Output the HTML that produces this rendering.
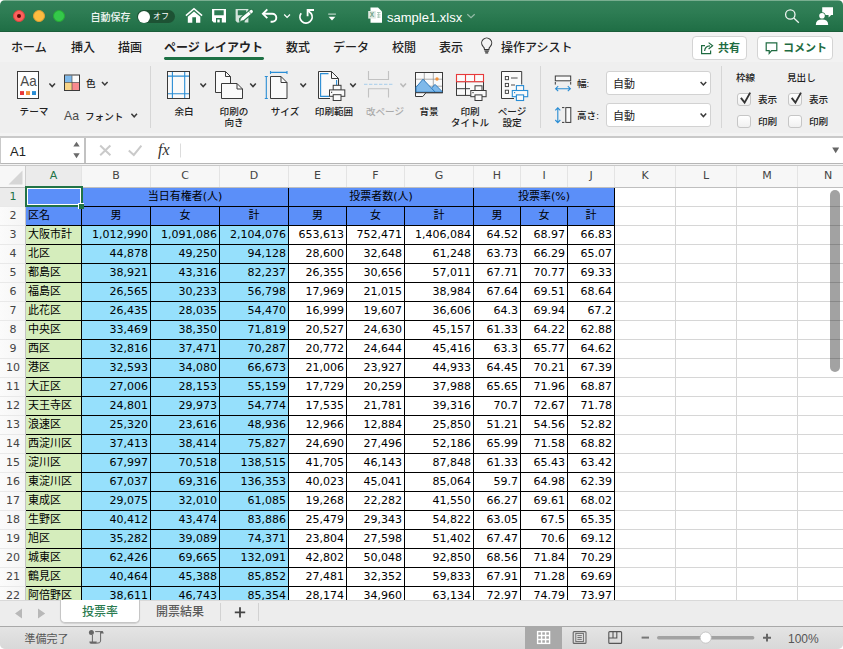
<!DOCTYPE html>
<html lang="ja">
<head>
<meta charset="utf-8">
<title>sample1.xlsx</title>
<style>
*{box-sizing:border-box;margin:0;padding:0}
html,body{width:843px;height:649px;overflow:hidden;background:#fff}
body{font-family:"Liberation Sans","Noto Sans CJK JP",sans-serif;color:#222;position:relative}
.abs{position:absolute}
#win{position:absolute;left:0;top:0;width:843px;height:649px;overflow:hidden;border-radius:5px 5px 5px 5px;background:#f1f1f1}
/* title bar */
#title{position:absolute;left:0;top:0;width:843px;height:32px;background:linear-gradient(#33815a 0,#2d7c53 40%,#1f6e45 100%);border-top:1px solid #79ae90;border-bottom:1px solid #1b5e3a}
.tl{position:absolute;top:8.6px;width:12.4px;height:12.4px;border-radius:50%}
#title .t{position:absolute;color:#fff;white-space:nowrap}
/* tabs */
#tabs{position:absolute;left:0;top:32px;width:843px;height:30px;background:#f2f2f2}
#tabs .tb{position:absolute;top:8px;font-size:12px;font-weight:500;line-height:16px;color:#222;white-space:nowrap}
.btn{position:absolute;top:4px;height:24px;border:1px solid #d4d4d4;border-radius:4px;background:#fff;font-size:11px;font-weight:bold;line-height:23px;color:#1e6b41;white-space:nowrap}
/* ribbon */
#ribbon{position:absolute;left:0;top:62px;width:843px;height:71px;background:#efefef}
#ribbon .lb{position:absolute;font-weight:500;font-size:9.6px;line-height:12px;color:#222;text-align:center;white-space:nowrap}
.dd{position:absolute;left:606px;width:105px;height:24px;border:1px solid #d2d2d2;border-radius:3px;background:#fff;font-size:11px;line-height:22px;padding-left:6px;padding-top:1px;color:#222}
.cb{position:absolute;width:14px;height:13px;border:1px solid #c6c6c6;border-radius:3px;background:linear-gradient(#fff,#f0f0f0)}
#ribbon .sep{position:absolute;top:4px;width:1px;height:62px;background:#d6d6d6}
/* formula bar */
#fgap{position:absolute;left:0;top:133px;width:843px;height:33px;background:#f3f3f3;border-bottom:1px solid #c8c8c8}
#fbar{position:absolute;left:0;top:136px;width:843px;height:28px;background:#fff;border-top:2px solid #c9c9c9;border-bottom:1px solid #b6b6b6;border-left:1px solid #c9c9c9}
/* grid */
#grid{position:absolute;left:0;top:166px;width:843px;height:434px;overflow:hidden;background:#fff;
 font-family:"DejaVu Sans","Liberation Sans","Noto Sans CJK JP",sans-serif;font-size:11px}
#gl{position:absolute;left:26px;top:22px;width:817px;height:413px;
 background-image:linear-gradient(to bottom,transparent 18px,#d6d6d6 18px);background-size:100% 19px;background-position:0 0}
.vl{position:absolute;top:21px;width:1px;height:413px;background:#d6d6d6}
.ch{position:absolute;top:0;height:22px;line-height:20px;text-align:center;color:#444;background:#f7f7f7;font-size:11px;border-bottom:1px solid #bfbfbf;z-index:3}
.ch.sel{color:#217346;background:#ebebeb}
.rh{position:absolute;left:0;padding-left:1px;width:26px;height:19px;line-height:18px;text-align:center;color:#444;background:linear-gradient(90deg,#fbfbfb,#f5f5f5);border-bottom:1px solid #e9e9e9;border-right:1px solid #c4c4c4;font-size:11px}
.rh.sel{color:#217346;background:#ebebeb}
#corner{position:absolute;left:0;top:0;width:26px;height:22px;background:#f7f7f7;border-bottom:1px solid #bfbfbf;z-index:3}
.c{position:absolute;height:20px;border:1px solid #000;line-height:18px;white-space:nowrap;overflow:hidden;color:#000}
.c.hd{background:#5b8ff9}
.c.gr{background:#d5edbc}
.c.bl{background:#96e0fc}
.c.wh{background:#fff}
.c.l{text-align:left;padding-left:2px;border-left:none}
.c.m{text-align:center}
.c.r{text-align:right;padding-right:2px}
/* sheet tabs */
#sheets{position:absolute;left:0;top:600px;width:843px;height:26px;background:#ededed;border-top:1px solid #d9d9d9}
#status{position:absolute;left:0;top:626px;width:843px;height:23px;background:linear-gradient(#e4e4e4,#d8d8d8);border-top:1px solid #a9a9a9}
</style>
</head>
<body>
<div id="win">

<div id="title">
  <div class="tl" style="left:12.8px;background:#fc615d;border:0.5px solid #e0443e"></div>
  <div class="tl" style="left:32.8px;background:#fdbc40;border:0.5px solid #de9f34"></div>
  <div class="tl" style="left:52.8px;background:#34c84a;border:0.5px solid #27aa35"></div>
  <div class="abs" style="left:17px;top:12.8px;width:4px;height:4px;border-radius:50%;background:#5c0805"></div>
  <div class="t" style="left:90.5px;top:9px;font-size:10px;font-weight:500;line-height:15px;color:#f1f6f3">自動保存</div>
  <div class="abs" style="left:137px;top:9px;width:38px;height:13px;border-radius:7px;background:#1d5234"></div>
  <div class="abs" style="left:138px;top:9.5px;width:12px;height:12px;border-radius:50%;background:#fff"></div>
  <div class="t" style="left:153px;top:10px;font-size:8px;line-height:11px">オフ</div>
  <svg class="abs" style="left:0;top:-1px" width="843" height="32" viewBox="0 0 843 32">
    <!-- home -->
    <path d="M185.9 15.6 L194 8.7 L202.1 15.6" fill="none" stroke="#fff" stroke-width="1.6"/>
    <path d="M187.8 16.8 L194 11.5 L200.3 16.8 V22.7 H196 V17.3 H192.3 V22.7 H187.8Z" fill="#fff"/>
    <!-- save -->
    <path d="M212 9 H226 V22.4 H213.6 L212 20.8Z M214.3 10.2 V15.3 H223.7 V10.2Z M216 18.1 V22.4 H221.8 V18.1Z" fill="#fff" fill-rule="evenodd"/>
    <rect x="217.3" y="19.5" width="2.4" height="2.9" fill="#fff"/>
    <!-- save as -->
    <path d="M235.6 9 H248.4 V22.4 H237.2 L235.6 20.8Z M237.8 10.2 V15.2 H246.2 V10.2Z M239.4 18.1 V22.4 H244.6 V18.1Z" fill="#fff" fill-opacity=".8" fill-rule="evenodd"/>
    <path d="M242 19.4 L251.3 11.6" stroke="#2a784e" stroke-width="5.6" stroke-linecap="round"/>
    <path d="M239.8 21.4 L240.9 17.6 L243.9 20.2Z" fill="#fff" stroke="#2a784e" stroke-width=".6"/>
    <path d="M243 18.4 L251.3 11.5" stroke="#fff" stroke-width="3.2" stroke-linecap="round"/>
    <path d="M248.2 10.6 L251.6 14.4" stroke="#2a784e" stroke-width=".7"/>
    <!-- undo -->
    <path d="M267.3 9.4 L262.9 13.8 L267.3 18.2" fill="none" stroke="#fff" stroke-width="1.9"/>
    <path d="M263.4 13.8 H272.3 A4 4 0 0 1 272.3 21.8 H270.6" fill="none" stroke="#fff" stroke-width="1.9"/>
    <path d="M284.2 14.5 L287.1 17.4 L290 14.5" fill="none" stroke="#fff" stroke-width="1.2"/>
    <!-- redo -->
    <path d="M301.2 13.2 A6.1 6.1 0 1 0 311.2 13.6 L307.6 10.2" fill="none" stroke="#fff" stroke-width="1.8"/>
    <path d="M307.6 16.2 V10 H314" fill="none" stroke="#fff" stroke-width="1.8"/>
    <!-- customize -->
    <rect x="328.2" y="13.4" width="7.7" height="1.5" fill="#fff" fill-opacity=".55"/>
    <path d="M328.6 16.8 H335.4 L332 20.6Z" fill="#fff"/>
    <!-- file icon -->
    <path d="M370.5 7.6 H378 L382 11.6 V22.8 H370.5Z" fill="#fff"/>
    <rect x="368.2" y="11" width="7.6" height="7.6" fill="#dfe9e3"/>
    <text x="372" y="17.3" font-size="6.5" font-weight="bold" fill="#6f9f84" text-anchor="middle" font-family="Liberation Sans, sans-serif">X</text>
    <path d="M377 12.5 H380.5 M377 14.8 H380.5 M377 17.1 H380.5 M378.7 12 V18" stroke="#9dbfab" stroke-width=".8"/>
    <!-- title chevron -->
    <path d="M467.3 14.2 L471 17.6 L474.7 14.2" fill="none" stroke="#fff" stroke-opacity=".5" stroke-width="1.2"/>
    <!-- search -->
    <circle cx="790.3" cy="14.5" r="4.7" fill="none" stroke="#fff" stroke-opacity=".92" stroke-width="1.3"/>
    <path d="M793.8 18 L798.8 22.7" stroke="#fff" stroke-opacity=".92" stroke-width="1.3"/>
    <!-- share person -->
    <path d="M822.2 7.2 H833 V15 H831.2 L828.6 17.6 V15 H822.2Z" fill="#fff"/>
    <circle cx="822" cy="15.8" r="3.6" fill="#2a774e"/>
    <circle cx="822" cy="15.8" r="2.8" fill="#fff"/>
    <path d="M815.8 25 Q815.8 19.6 822 19.6 Q828.2 19.6 828.2 25Z" fill="#fff"/>
  </svg>
  <div class="t" style="left:387px;top:8px;font-size:13px;line-height:17px">sample1.xlsx</div>
</div>

<div id="tabs">
  <div class="tb" style="left:11px">ホーム</div>
  <div class="tb" style="left:71px">挿入</div>
  <div class="tb" style="left:118px">描画</div>
  <div class="tb" style="left:164px;font-weight:bold">ページ レイアウト</div>
  <div class="abs" style="left:163.5px;top:25px;width:100.5px;height:2.8px;background:#1e7145;border-radius:1.4px"></div>
  <div class="tb" style="left:286px">数式</div>
  <div class="tb" style="left:333px">データ</div>
  <div class="tb" style="left:392px">校閲</div>
  <div class="tb" style="left:439px">表示</div>
  <div class="tb" style="left:501px">操作アシスト</div>
  <div class="btn" style="left:692px;width:55px;padding-left:25px">共有</div>
  <div class="btn" style="left:757px;width:76px;padding-left:25px">コメント</div>
  <svg class="abs" style="left:0;top:0" width="843" height="30" viewBox="0 32 843 30">
    <path d="M484.5 49.6 Q484.5 47.6 483 46.4 A5 5 0 1 1 490.4 46.4 Q488.9 47.6 488.9 49.6Z" fill="none" stroke="#333" stroke-width="1.1"/>
    <path d="M484.6 51.1 H488.8 M485.2 52.9 H488.2" stroke="#333" stroke-width="1.1"/>
    <g fill="none" stroke="#1e6b41" stroke-width="1.2">
      <path d="M705 45.6 H701.6 V53.6 H710.6 V50.6"/>
      <path d="M704.6 51 Q705 46 710 45.8 M708.6 42.6 L712.6 45.8 L708.6 49"/>
      <path d="M766.2 42.9 H776.8 V50.6 H771.6 L769.2 53.4 V50.6 H766.2Z"/>
    </g>
  </svg>
</div>

<div id="ribbon">
<svg class="abs" style="left:0;top:0;z-index:2" width="843" height="73" viewBox="0 62 843 73">
  <g fill="none" stroke="#3a3a3a" stroke-width="1.5">
    <!-- chevrons -->
    <path d="M49.4 83.6 L52.2 86.6 L55 83.6"/>
    <path d="M102 82 L104.8 85 L107.6 82"/>
    <path d="M131.4 113.8 L134.2 116.8 L137 113.8"/>
    <path d="M200.4 83.6 L203.2 86.6 L206 83.6"/>
    <path d="M250.2 83.6 L253 86.6 L255.8 83.6"/>
    <path d="M300.4 83.6 L303.2 86.6 L306 83.6"/>
    <path d="M350.2 83.6 L353 86.6 L355.8 83.6"/>
    <path d="M400.4 83.6 L403.2 86.6 L406 83.6" stroke="#b9b9b9"/>
    <path d="M700.6 82 L703.4 85 L706.2 82"/>
    <path d="M700.6 113.6 L703.4 116.6 L706.2 113.6"/>
  </g>
  <!-- theme -->
  <rect x="17.5" y="71.5" width="21" height="27" fill="#fff" stroke="#3a3a3a"/>
  <text x="20.2" y="85.9" font-size="14.8" fill="#4a4a4a" textLength="16.4" lengthAdjust="spacingAndGlyphs" font-family="Liberation Sans, sans-serif">Aa</text>
  <rect x="20" y="91.1" width="4" height="3.9" fill="#e8393a"/>
  <rect x="26" y="91.1" width="4" height="3.9" fill="#f4923a"/>
  <rect x="32" y="91.1" width="4" height="3.9" fill="#2a8dd4"/>
  <!-- colours -->
  <rect x="65" y="75.5" width="7" height="7" fill="#7fb9ea"/>
  <rect x="72" y="75.5" width="7" height="7" fill="#fbfbfb"/>
  <rect x="65" y="82.5" width="7" height="7.5" fill="#f8d488"/>
  <rect x="72" y="82.5" width="7" height="7.5" fill="#f98a8f"/>
  <rect x="64.5" y="75" width="15" height="15.5" fill="none" stroke="#3a3a3a"/>
  <path d="M72 75.5 V90 M65 82.5 H79" stroke="#3a3a3a" stroke-width=".6"/>
  <!-- fonts Aa -->
  <text x="64" y="119.8" font-size="13.2" fill="#4a4a4a" textLength="15" lengthAdjust="spacingAndGlyphs" font-family="Liberation Sans, sans-serif">Aa</text>
  <!-- margins -->
  <rect x="167.5" y="71.5" width="22" height="27" fill="#fafafa" stroke="#3a3a3a"/>
  <path d="M172.4 72 V98 M184.7 72 V98 M168 76.1 H189 M168 93.7 H189" stroke="#2a8dd4" stroke-width="1.1"/>
  <!-- orientation -->
  <path d="M221 92.5 H215.5 V71.5 H225.5 L230.5 76.5 V83" fill="#fafafa" stroke="#3a3a3a"/>
  <path d="M225.5 71.5 V76.5 H230.5" fill="none" stroke="#3a3a3a"/>
  <path d="M221.5 83.5 H237 L242.5 89 V98.5 H221.5Z" fill="#fafafa" stroke="#3a3a3a"/>
  <path d="M237 83.5 V89 H242.5" fill="none" stroke="#3a3a3a"/>
  <!-- size -->
  <path d="M270.5 76.5 H281 L287 82.5 V98.5 H270.5Z" fill="#fafafa" stroke="#3a3a3a"/>
  <path d="M281 76.5 V82.5 H287" fill="none" stroke="#3a3a3a"/>
  <path d="M270.5 72.4 H287 M270.5 70.9 V73.9 M287 70.9 V73.9 M266.3 76.5 V98.5 M264.8 76.5 H267.8 M264.8 98.5 H267.8" stroke="#2a8dd4" stroke-width="1.1" fill="none"/>
  <!-- print area -->
  <path d="M330 98.5 H318.5 V71.5 H331.5 L338.5 78.5 V86" fill="#fafafa" stroke="#3a3a3a"/>
  <path d="M331.5 71.5 V78.5 H338.5" fill="none" stroke="#3a3a3a"/>
  <path d="M328.5 73.6 H320.6 V96.4 H329 M336.6 80 V85.5" fill="none" stroke="#2a8dd4" stroke-width="1.1"/>
  <g fill="#fafafa" stroke="#3a3a3a">
    <rect x="333.2" y="85.3" width="7.8" height="5"/>
    <rect x="329.5" y="89.9" width="15.3" height="6.4"/>
    <rect x="333.2" y="94.7" width="7.8" height="5.8"/>
  </g>
  <rect x="331" y="91.7" width="1.2" height="1.2" fill="#3a3a3a"/>
  <!-- page break (disabled) -->
  <path d="M368.5 71 V79.5 H388.5 V71 M368.5 97.5 V88.7 H388.5 V97.5" fill="none" stroke="#c2c2c2" stroke-width="1.1"/>
  <path d="M364 84.4 H393" stroke="#b5d4ec" stroke-width="1.1" stroke-dasharray="3.4 1.6"/>
  <!-- background -->
  <rect x="415.5" y="72.5" width="27" height="20.2" fill="#fafafa" stroke="#3a3a3a"/>
  <path d="M424.3 73 V92 M433.3 73 V92 M416 79.2 H442 M416 86.2 H442" stroke="#8a8a8a" stroke-width=".7"/>
  <path d="M416 87.3 L423 79.2 L431.5 88.2 L435 84.4 L442 91.4 V92.2 H416Z" fill="#7fb9ea" stroke="#1f6fb5" stroke-width=".9"/>
  <path d="M431.5 88.2 L435.4 92.4" stroke="#1f6fb5" stroke-width=".9"/>
  <circle cx="437" cy="79" r="1.7" fill="#f4923a"/>
  <path d="M415.5 92.7 V96.5 H422.8 L426 92.7" fill="#fafafa" stroke="#3a3a3a"/>
  <path d="M415.5 92.7 H442.5" stroke="#3a3a3a"/>
  <!-- print titles -->
  <rect x="456.5" y="81.6" width="27" height="13.8" fill="#fafafa" stroke="#3a3a3a"/>
  <path d="M457 88.7 H470 M465.5 81.6 V95.4" stroke="#3a3a3a"/>
  <rect x="456.5" y="74.5" width="27" height="7.2" fill="#fafafa" stroke="#e8393a" stroke-width="1.1"/>
  <path d="M465.5 74.5 V81.6 M474.6 74.5 V81.6" stroke="#e8393a" stroke-width="1.1"/>
  <g fill="#fafafa" stroke="#3a3a3a">
    <rect x="475" y="85.8" width="7" height="5"/>
    <rect x="470.8" y="90.5" width="15.3" height="6.2"/>
    <rect x="475" y="94.9" width="7" height="5.6"/>
  </g>
  <rect x="472.4" y="92" width="1.2" height="1.2" fill="#3a3a3a"/>
  <!-- page setup -->
  <path d="M514 98.5 H501.5 V71.5 H521.7 V84.5" fill="#fafafa" stroke="#3a3a3a"/>
  <g fill="none" stroke="#3a3a3a" stroke-width=".9">
    <rect x="505.3" y="76.5" width="3.2" height="3.2"/>
    <rect x="505.3" y="83.4" width="3.2" height="3.2"/>
    <rect x="505.3" y="90.2" width="3.2" height="3.2"/>
    <path d="M511 78 H517.6 M511 85 H515"/>
  </g>
  <g fill="#fafafa" stroke="#2a8dd4" stroke-width="1.1">
    <rect x="516.4" y="85.6" width="7.2" height="5"/>
    <rect x="512.3" y="90.5" width="15.4" height="6.2"/>
    <rect x="516.4" y="94.9" width="7.2" height="5.6"/>
  </g>
  <rect x="514" y="92" width="1.2" height="1.2" fill="#2a8dd4"/>
  <!-- width icon -->
  <rect x="555.3" y="76" width="15.4" height="4.8" fill="#fafafa" stroke="#3a3a3a"/>
  <path d="M555.3 82 V84.6 M570.7 82 V84.6" stroke="#3a3a3a"/>
  <path d="M555.6 88.7 H570.4 M558.2 86.2 L555.6 88.7 L558.2 91.2 M567.8 86.2 L570.4 88.7 L567.8 91.2" fill="none" stroke="#2a8dd4" stroke-width="1.1"/>
  <!-- height icon -->
  <rect x="565.8" y="107.6" width="5" height="14.8" fill="#fafafa" stroke="#3a3a3a"/>
  <path d="M562 107.6 H564.4 M562 122.4 H564.4" stroke="#3a3a3a"/>
  <path d="M557.8 107.8 V122.6 M555.3 110.4 L557.8 107.8 L560.3 110.4 M555.3 120 L557.8 122.6 L560.3 120" fill="none" stroke="#2a8dd4" stroke-width="1.1"/>
  <!-- checkmarks -->
  <path d="M740.9 97.9 L744.6 102.6 L750.2 92.6" fill="none" stroke="#333" stroke-width="1.9"/>
  <path d="M791.7 97.9 L795.4 102.6 L801 92.6" fill="none" stroke="#333" stroke-width="1.9"/>
</svg>
<div class="sep" style="left:150px"></div>
<div class="sep" style="left:540px"></div>
<div class="sep" style="left:721px"></div>
<div class="lb" style="left:13px;top:44px;width:42px">テーマ</div>
<div class="lb" style="left:86px;top:16px">色</div>
<div class="lb" style="left:85px;top:49px">フォント</div>
<div class="lb" style="left:164px;top:44px;width:40px">余白</div>
<div class="lb" style="left:209px;top:44px;width:50px;line-height:11px">印刷の<br>向き</div>
<div class="lb" style="left:260px;top:44px;width:50px">サイズ</div>
<div class="lb" style="left:309px;top:44px;width:50px">印刷範囲</div>
<div class="lb" style="left:360px;top:44px;width:50px;color:#aaa">改ページ</div>
<div class="lb" style="left:404px;top:44px;width:50px">背景</div>
<div class="lb" style="left:445px;top:44px;width:50px;line-height:11px">印刷<br>タイトル</div>
<div class="lb" style="left:487px;top:44px;width:50px;line-height:11px">ページ<br>設定</div>
<div class="lb" style="left:577px;top:16px">幅:</div>
<div class="lb" style="left:577px;top:48px">高さ:</div>
<div class="dd" style="top:9px">自動</div>
<div class="dd" style="top:41px">自動</div>
<div class="lb" style="left:736px;top:10px">枠線</div>
<div class="lb" style="left:787px;top:10px">見出し</div>
<div class="cb" style="left:737px;top:31px"></div>
<div class="cb" style="left:788px;top:31px"></div>
<div class="cb" style="left:737px;top:53px"></div>
<div class="cb" style="left:788px;top:53px"></div>
<div class="lb" style="left:758px;top:32px">表示</div>
<div class="lb" style="left:809px;top:32px">表示</div>
<div class="lb" style="left:758px;top:54px">印刷</div>
<div class="lb" style="left:809px;top:54px">印刷</div>

</div>

<div id="fgap"></div>
<div id="fbar">
  <div class="abs" style="left:9px;top:5px;font-size:13px;line-height:17px;color:#222">A1</div>
  <div class="abs" style="left:83px;top:0;width:2px;height:25px;background:#c2c2c2"></div>
  <svg class="abs" style="left:-1px;top:-2px" width="843" height="28" viewBox="0 136 843 28">
    <path d="M73.3 146.6 L76.5 141.8 L79.7 146.6Z M73.3 153.3 L76.5 158.2 L79.7 153.3Z" fill="#6a6a6a"/>
    <path d="M100.2 145.5 L110.4 155.3 M110.4 145.5 L100.2 155.3" stroke="#cacaca" stroke-width="2" fill="none"/>
    <path d="M128.8 150.6 L133.8 155 L141.4 145.6" stroke="#cacaca" stroke-width="2" fill="none"/>
    <path d="M180.5 143.5 V157.5" stroke="#dcdcdc"/>
    <path d="M832.2 147.4 H839.2 L835.7 153.2Z" fill="#666"/>
  </svg>
  <div class="abs" style="left:157px;top:2px;font-family:'Liberation Serif','DejaVu Serif',serif;font-style:italic;font-size:16px;line-height:20px;color:#333">fx</div>
</div>

<div id="grid">
  <div id="gl"></div>
  <div class="abs" style="left:0;top:0;width:843px;height:22px;background:#e4e4e4;border-bottom:1px solid #bfbfbf;z-index:2"></div>
  <div id="corner"><svg width="26" height="22" style="position:absolute;left:0;top:0"><path d="M22.5 4.5V18.5H8.5Z" fill="#d6d6d6"/><path d="M25.5 0V22" stroke="#cdcdcd"/></svg></div>
<div class="vl" style="left:81px"></div>
<div class="vl" style="left:150px"></div>
<div class="vl" style="left:219px"></div>
<div class="vl" style="left:288px"></div>
<div class="vl" style="left:346px"></div>
<div class="vl" style="left:404px"></div>
<div class="vl" style="left:473px"></div>
<div class="vl" style="left:520px"></div>
<div class="vl" style="left:567px"></div>
<div class="vl" style="left:614px"></div>
<div class="vl" style="left:675px"></div>
<div class="vl" style="left:736px"></div>
<div class="vl" style="left:797px"></div>
<div class="ch sel" style="left:26px;width:55px">A</div>
<div class="ch" style="left:82px;width:68px">B</div>
<div class="ch" style="left:151px;width:68px">C</div>
<div class="ch" style="left:220px;width:68px">D</div>
<div class="ch" style="left:289px;width:57px">E</div>
<div class="ch" style="left:347px;width:57px">F</div>
<div class="ch" style="left:405px;width:68px">G</div>
<div class="ch" style="left:474px;width:46px">H</div>
<div class="ch" style="left:521px;width:46px">I</div>
<div class="ch" style="left:568px;width:46px">J</div>
<div class="ch" style="left:615px;width:60px">K</div>
<div class="ch" style="left:676px;width:60px">L</div>
<div class="ch" style="left:737px;width:60px">M</div>
<div class="ch" style="left:798px;width:60px">N</div>
<div class="rh sel" style="top:22px">1</div>
<div class="rh" style="top:41px">2</div>
<div class="rh" style="top:60px">3</div>
<div class="rh" style="top:79px">4</div>
<div class="rh" style="top:98px">5</div>
<div class="rh" style="top:117px">6</div>
<div class="rh" style="top:136px">7</div>
<div class="rh" style="top:155px">8</div>
<div class="rh" style="top:174px">9</div>
<div class="rh" style="top:193px">10</div>
<div class="rh" style="top:212px">11</div>
<div class="rh" style="top:231px">12</div>
<div class="rh" style="top:250px">13</div>
<div class="rh" style="top:269px">14</div>
<div class="rh" style="top:288px">15</div>
<div class="rh" style="top:307px">16</div>
<div class="rh" style="top:326px">17</div>
<div class="rh" style="top:345px">18</div>
<div class="rh" style="top:364px">19</div>
<div class="rh" style="top:383px">20</div>
<div class="rh" style="top:402px">21</div>
<div class="rh" style="top:421px">22</div>
<div class="c hd l" style="left:26px;top:21px;width:56px"></div>
<div class="c hd m" style="left:81px;top:21px;width:208px">当日有権者(人)</div>
<div class="c hd m" style="left:288px;top:21px;width:186px">投票者数(人)</div>
<div class="c hd m" style="left:473px;top:21px;width:142px">投票率(%)</div>
<div class="c hd l" style="left:26px;top:40px;width:56px">区名</div>
<div class="c hd m" style="left:81px;top:40px;width:70px">男</div>
<div class="c hd m" style="left:150px;top:40px;width:70px">女</div>
<div class="c hd m" style="left:219px;top:40px;width:70px">計</div>
<div class="c hd m" style="left:288px;top:40px;width:59px">男</div>
<div class="c hd m" style="left:346px;top:40px;width:59px">女</div>
<div class="c hd m" style="left:404px;top:40px;width:70px">計</div>
<div class="c hd m" style="left:473px;top:40px;width:48px">男</div>
<div class="c hd m" style="left:520px;top:40px;width:48px">女</div>
<div class="c hd m" style="left:567px;top:40px;width:48px">計</div>
<div class="c gr l" style="left:26px;top:59px;width:56px">大阪市計</div>
<div class="c bl r" style="left:81px;top:59px;width:70px">1,012,990</div>
<div class="c bl r" style="left:150px;top:59px;width:70px">1,091,086</div>
<div class="c bl r" style="left:219px;top:59px;width:70px">2,104,076</div>
<div class="c wh r" style="left:288px;top:59px;width:59px">653,613</div>
<div class="c wh r" style="left:346px;top:59px;width:59px">752,471</div>
<div class="c wh r" style="left:404px;top:59px;width:70px">1,406,084</div>
<div class="c wh r" style="left:473px;top:59px;width:48px">64.52</div>
<div class="c wh r" style="left:520px;top:59px;width:48px">68.97</div>
<div class="c wh r" style="left:567px;top:59px;width:48px">66.83</div>
<div class="c gr l" style="left:26px;top:78px;width:56px">北区</div>
<div class="c bl r" style="left:81px;top:78px;width:70px">44,878</div>
<div class="c bl r" style="left:150px;top:78px;width:70px">49,250</div>
<div class="c bl r" style="left:219px;top:78px;width:70px">94,128</div>
<div class="c wh r" style="left:288px;top:78px;width:59px">28,600</div>
<div class="c wh r" style="left:346px;top:78px;width:59px">32,648</div>
<div class="c wh r" style="left:404px;top:78px;width:70px">61,248</div>
<div class="c wh r" style="left:473px;top:78px;width:48px">63.73</div>
<div class="c wh r" style="left:520px;top:78px;width:48px">66.29</div>
<div class="c wh r" style="left:567px;top:78px;width:48px">65.07</div>
<div class="c gr l" style="left:26px;top:97px;width:56px">都島区</div>
<div class="c bl r" style="left:81px;top:97px;width:70px">38,921</div>
<div class="c bl r" style="left:150px;top:97px;width:70px">43,316</div>
<div class="c bl r" style="left:219px;top:97px;width:70px">82,237</div>
<div class="c wh r" style="left:288px;top:97px;width:59px">26,355</div>
<div class="c wh r" style="left:346px;top:97px;width:59px">30,656</div>
<div class="c wh r" style="left:404px;top:97px;width:70px">57,011</div>
<div class="c wh r" style="left:473px;top:97px;width:48px">67.71</div>
<div class="c wh r" style="left:520px;top:97px;width:48px">70.77</div>
<div class="c wh r" style="left:567px;top:97px;width:48px">69.33</div>
<div class="c gr l" style="left:26px;top:116px;width:56px">福島区</div>
<div class="c bl r" style="left:81px;top:116px;width:70px">26,565</div>
<div class="c bl r" style="left:150px;top:116px;width:70px">30,233</div>
<div class="c bl r" style="left:219px;top:116px;width:70px">56,798</div>
<div class="c wh r" style="left:288px;top:116px;width:59px">17,969</div>
<div class="c wh r" style="left:346px;top:116px;width:59px">21,015</div>
<div class="c wh r" style="left:404px;top:116px;width:70px">38,984</div>
<div class="c wh r" style="left:473px;top:116px;width:48px">67.64</div>
<div class="c wh r" style="left:520px;top:116px;width:48px">69.51</div>
<div class="c wh r" style="left:567px;top:116px;width:48px">68.64</div>
<div class="c gr l" style="left:26px;top:135px;width:56px">此花区</div>
<div class="c bl r" style="left:81px;top:135px;width:70px">26,435</div>
<div class="c bl r" style="left:150px;top:135px;width:70px">28,035</div>
<div class="c bl r" style="left:219px;top:135px;width:70px">54,470</div>
<div class="c wh r" style="left:288px;top:135px;width:59px">16,999</div>
<div class="c wh r" style="left:346px;top:135px;width:59px">19,607</div>
<div class="c wh r" style="left:404px;top:135px;width:70px">36,606</div>
<div class="c wh r" style="left:473px;top:135px;width:48px">64.3</div>
<div class="c wh r" style="left:520px;top:135px;width:48px">69.94</div>
<div class="c wh r" style="left:567px;top:135px;width:48px">67.2</div>
<div class="c gr l" style="left:26px;top:154px;width:56px">中央区</div>
<div class="c bl r" style="left:81px;top:154px;width:70px">33,469</div>
<div class="c bl r" style="left:150px;top:154px;width:70px">38,350</div>
<div class="c bl r" style="left:219px;top:154px;width:70px">71,819</div>
<div class="c wh r" style="left:288px;top:154px;width:59px">20,527</div>
<div class="c wh r" style="left:346px;top:154px;width:59px">24,630</div>
<div class="c wh r" style="left:404px;top:154px;width:70px">45,157</div>
<div class="c wh r" style="left:473px;top:154px;width:48px">61.33</div>
<div class="c wh r" style="left:520px;top:154px;width:48px">64.22</div>
<div class="c wh r" style="left:567px;top:154px;width:48px">62.88</div>
<div class="c gr l" style="left:26px;top:173px;width:56px">西区</div>
<div class="c bl r" style="left:81px;top:173px;width:70px">32,816</div>
<div class="c bl r" style="left:150px;top:173px;width:70px">37,471</div>
<div class="c bl r" style="left:219px;top:173px;width:70px">70,287</div>
<div class="c wh r" style="left:288px;top:173px;width:59px">20,772</div>
<div class="c wh r" style="left:346px;top:173px;width:59px">24,644</div>
<div class="c wh r" style="left:404px;top:173px;width:70px">45,416</div>
<div class="c wh r" style="left:473px;top:173px;width:48px">63.3</div>
<div class="c wh r" style="left:520px;top:173px;width:48px">65.77</div>
<div class="c wh r" style="left:567px;top:173px;width:48px">64.62</div>
<div class="c gr l" style="left:26px;top:192px;width:56px">港区</div>
<div class="c bl r" style="left:81px;top:192px;width:70px">32,593</div>
<div class="c bl r" style="left:150px;top:192px;width:70px">34,080</div>
<div class="c bl r" style="left:219px;top:192px;width:70px">66,673</div>
<div class="c wh r" style="left:288px;top:192px;width:59px">21,006</div>
<div class="c wh r" style="left:346px;top:192px;width:59px">23,927</div>
<div class="c wh r" style="left:404px;top:192px;width:70px">44,933</div>
<div class="c wh r" style="left:473px;top:192px;width:48px">64.45</div>
<div class="c wh r" style="left:520px;top:192px;width:48px">70.21</div>
<div class="c wh r" style="left:567px;top:192px;width:48px">67.39</div>
<div class="c gr l" style="left:26px;top:211px;width:56px">大正区</div>
<div class="c bl r" style="left:81px;top:211px;width:70px">27,006</div>
<div class="c bl r" style="left:150px;top:211px;width:70px">28,153</div>
<div class="c bl r" style="left:219px;top:211px;width:70px">55,159</div>
<div class="c wh r" style="left:288px;top:211px;width:59px">17,729</div>
<div class="c wh r" style="left:346px;top:211px;width:59px">20,259</div>
<div class="c wh r" style="left:404px;top:211px;width:70px">37,988</div>
<div class="c wh r" style="left:473px;top:211px;width:48px">65.65</div>
<div class="c wh r" style="left:520px;top:211px;width:48px">71.96</div>
<div class="c wh r" style="left:567px;top:211px;width:48px">68.87</div>
<div class="c gr l" style="left:26px;top:230px;width:56px">天王寺区</div>
<div class="c bl r" style="left:81px;top:230px;width:70px">24,801</div>
<div class="c bl r" style="left:150px;top:230px;width:70px">29,973</div>
<div class="c bl r" style="left:219px;top:230px;width:70px">54,774</div>
<div class="c wh r" style="left:288px;top:230px;width:59px">17,535</div>
<div class="c wh r" style="left:346px;top:230px;width:59px">21,781</div>
<div class="c wh r" style="left:404px;top:230px;width:70px">39,316</div>
<div class="c wh r" style="left:473px;top:230px;width:48px">70.7</div>
<div class="c wh r" style="left:520px;top:230px;width:48px">72.67</div>
<div class="c wh r" style="left:567px;top:230px;width:48px">71.78</div>
<div class="c gr l" style="left:26px;top:249px;width:56px">浪速区</div>
<div class="c bl r" style="left:81px;top:249px;width:70px">25,320</div>
<div class="c bl r" style="left:150px;top:249px;width:70px">23,616</div>
<div class="c bl r" style="left:219px;top:249px;width:70px">48,936</div>
<div class="c wh r" style="left:288px;top:249px;width:59px">12,966</div>
<div class="c wh r" style="left:346px;top:249px;width:59px">12,884</div>
<div class="c wh r" style="left:404px;top:249px;width:70px">25,850</div>
<div class="c wh r" style="left:473px;top:249px;width:48px">51.21</div>
<div class="c wh r" style="left:520px;top:249px;width:48px">54.56</div>
<div class="c wh r" style="left:567px;top:249px;width:48px">52.82</div>
<div class="c gr l" style="left:26px;top:268px;width:56px">西淀川区</div>
<div class="c bl r" style="left:81px;top:268px;width:70px">37,413</div>
<div class="c bl r" style="left:150px;top:268px;width:70px">38,414</div>
<div class="c bl r" style="left:219px;top:268px;width:70px">75,827</div>
<div class="c wh r" style="left:288px;top:268px;width:59px">24,690</div>
<div class="c wh r" style="left:346px;top:268px;width:59px">27,496</div>
<div class="c wh r" style="left:404px;top:268px;width:70px">52,186</div>
<div class="c wh r" style="left:473px;top:268px;width:48px">65.99</div>
<div class="c wh r" style="left:520px;top:268px;width:48px">71.58</div>
<div class="c wh r" style="left:567px;top:268px;width:48px">68.82</div>
<div class="c gr l" style="left:26px;top:287px;width:56px">淀川区</div>
<div class="c bl r" style="left:81px;top:287px;width:70px">67,997</div>
<div class="c bl r" style="left:150px;top:287px;width:70px">70,518</div>
<div class="c bl r" style="left:219px;top:287px;width:70px">138,515</div>
<div class="c wh r" style="left:288px;top:287px;width:59px">41,705</div>
<div class="c wh r" style="left:346px;top:287px;width:59px">46,143</div>
<div class="c wh r" style="left:404px;top:287px;width:70px">87,848</div>
<div class="c wh r" style="left:473px;top:287px;width:48px">61.33</div>
<div class="c wh r" style="left:520px;top:287px;width:48px">65.43</div>
<div class="c wh r" style="left:567px;top:287px;width:48px">63.42</div>
<div class="c gr l" style="left:26px;top:306px;width:56px">東淀川区</div>
<div class="c bl r" style="left:81px;top:306px;width:70px">67,037</div>
<div class="c bl r" style="left:150px;top:306px;width:70px">69,316</div>
<div class="c bl r" style="left:219px;top:306px;width:70px">136,353</div>
<div class="c wh r" style="left:288px;top:306px;width:59px">40,023</div>
<div class="c wh r" style="left:346px;top:306px;width:59px">45,041</div>
<div class="c wh r" style="left:404px;top:306px;width:70px">85,064</div>
<div class="c wh r" style="left:473px;top:306px;width:48px">59.7</div>
<div class="c wh r" style="left:520px;top:306px;width:48px">64.98</div>
<div class="c wh r" style="left:567px;top:306px;width:48px">62.39</div>
<div class="c gr l" style="left:26px;top:325px;width:56px">東成区</div>
<div class="c bl r" style="left:81px;top:325px;width:70px">29,075</div>
<div class="c bl r" style="left:150px;top:325px;width:70px">32,010</div>
<div class="c bl r" style="left:219px;top:325px;width:70px">61,085</div>
<div class="c wh r" style="left:288px;top:325px;width:59px">19,268</div>
<div class="c wh r" style="left:346px;top:325px;width:59px">22,282</div>
<div class="c wh r" style="left:404px;top:325px;width:70px">41,550</div>
<div class="c wh r" style="left:473px;top:325px;width:48px">66.27</div>
<div class="c wh r" style="left:520px;top:325px;width:48px">69.61</div>
<div class="c wh r" style="left:567px;top:325px;width:48px">68.02</div>
<div class="c gr l" style="left:26px;top:344px;width:56px">生野区</div>
<div class="c bl r" style="left:81px;top:344px;width:70px">40,412</div>
<div class="c bl r" style="left:150px;top:344px;width:70px">43,474</div>
<div class="c bl r" style="left:219px;top:344px;width:70px">83,886</div>
<div class="c wh r" style="left:288px;top:344px;width:59px">25,479</div>
<div class="c wh r" style="left:346px;top:344px;width:59px">29,343</div>
<div class="c wh r" style="left:404px;top:344px;width:70px">54,822</div>
<div class="c wh r" style="left:473px;top:344px;width:48px">63.05</div>
<div class="c wh r" style="left:520px;top:344px;width:48px">67.5</div>
<div class="c wh r" style="left:567px;top:344px;width:48px">65.35</div>
<div class="c gr l" style="left:26px;top:363px;width:56px">旭区</div>
<div class="c bl r" style="left:81px;top:363px;width:70px">35,282</div>
<div class="c bl r" style="left:150px;top:363px;width:70px">39,089</div>
<div class="c bl r" style="left:219px;top:363px;width:70px">74,371</div>
<div class="c wh r" style="left:288px;top:363px;width:59px">23,804</div>
<div class="c wh r" style="left:346px;top:363px;width:59px">27,598</div>
<div class="c wh r" style="left:404px;top:363px;width:70px">51,402</div>
<div class="c wh r" style="left:473px;top:363px;width:48px">67.47</div>
<div class="c wh r" style="left:520px;top:363px;width:48px">70.6</div>
<div class="c wh r" style="left:567px;top:363px;width:48px">69.12</div>
<div class="c gr l" style="left:26px;top:382px;width:56px">城東区</div>
<div class="c bl r" style="left:81px;top:382px;width:70px">62,426</div>
<div class="c bl r" style="left:150px;top:382px;width:70px">69,665</div>
<div class="c bl r" style="left:219px;top:382px;width:70px">132,091</div>
<div class="c wh r" style="left:288px;top:382px;width:59px">42,802</div>
<div class="c wh r" style="left:346px;top:382px;width:59px">50,048</div>
<div class="c wh r" style="left:404px;top:382px;width:70px">92,850</div>
<div class="c wh r" style="left:473px;top:382px;width:48px">68.56</div>
<div class="c wh r" style="left:520px;top:382px;width:48px">71.84</div>
<div class="c wh r" style="left:567px;top:382px;width:48px">70.29</div>
<div class="c gr l" style="left:26px;top:401px;width:56px">鶴見区</div>
<div class="c bl r" style="left:81px;top:401px;width:70px">40,464</div>
<div class="c bl r" style="left:150px;top:401px;width:70px">45,388</div>
<div class="c bl r" style="left:219px;top:401px;width:70px">85,852</div>
<div class="c wh r" style="left:288px;top:401px;width:59px">27,481</div>
<div class="c wh r" style="left:346px;top:401px;width:59px">32,352</div>
<div class="c wh r" style="left:404px;top:401px;width:70px">59,833</div>
<div class="c wh r" style="left:473px;top:401px;width:48px">67.91</div>
<div class="c wh r" style="left:520px;top:401px;width:48px">71.28</div>
<div class="c wh r" style="left:567px;top:401px;width:48px">69.69</div>
<div class="c gr l" style="left:26px;top:420px;width:56px">阿倍野区</div>
<div class="c bl r" style="left:81px;top:420px;width:70px">38,611</div>
<div class="c bl r" style="left:150px;top:420px;width:70px">46,743</div>
<div class="c bl r" style="left:219px;top:420px;width:70px">85,354</div>
<div class="c wh r" style="left:288px;top:420px;width:59px">28,174</div>
<div class="c wh r" style="left:346px;top:420px;width:59px">34,960</div>
<div class="c wh r" style="left:404px;top:420px;width:70px">63,134</div>
<div class="c wh r" style="left:473px;top:420px;width:48px">72.97</div>
<div class="c wh r" style="left:520px;top:420px;width:48px">74.79</div>
<div class="c wh r" style="left:567px;top:420px;width:48px">73.97</div>
  <div class="abs" style="left:25px;top:20px;width:58px;height:21px;border:2px solid #217346;box-shadow:inset 0 0 0 1px #fff;z-index:4"></div>
  <div class="abs" style="left:78px;top:37px;width:6px;height:6px;background:#217346;border-left:1px solid #fff;border-top:1px solid #fff;z-index:5"></div>
</div>

<div class="abs" style="left:830px;top:190px;width:10px;height:182px;border-radius:5px;background:rgba(0,0,0,.365);z-index:6"></div>
<div id="sheets">
  <div class="abs" style="left:60px;top:-1px;width:80px;height:23px;background:#fff;border:1px solid #c6c6c6;border-top:none;border-radius:0 0 5px 5px;box-shadow:0 1px 1px rgba(0,0,0,.12)"></div>
  <div class="abs" style="left:82px;top:3px;font-size:12px;font-weight:500;line-height:16px;color:#2a7a4f">投票率</div>
  <div class="abs" style="left:156px;top:3px;font-size:12px;font-weight:500;line-height:16px;color:#5a5a5a">開票結果</div>
  <svg class="abs" style="left:0;top:-1px" width="843" height="25" viewBox="0 600 843 25">
    <path d="M22 608.4 V618.4 L15 613.4Z M38 608.4 V618.4 L45.2 613.4Z" fill="#b8b8b8"/>
    <path d="M220.5 603 V621 M258.5 603 V621" stroke="#d2d2d2"/>
    <path d="M234.8 612.4 H245.2 M240 607.2 V617.6" stroke="#444" stroke-width="1.8"/>
  </svg>
</div>
<div id="status">
  <div class="abs" style="left:24.5px;top:5px;font-size:11px;line-height:14px;color:#555">準備完了</div>
  <div class="abs" style="left:525px;top:0;width:37px;height:23px;background:#a9a9a9"></div>
  <svg class="abs" style="left:0;top:-1px" width="843" height="24" viewBox="0 626 843 24">
    <!-- macro icon -->
    <circle cx="91.4" cy="632.6" r="2.5" fill="#666"/>
    <path d="M92.4 635 V642" stroke="#666" stroke-width="1"/>
    <path d="M89.3 641.4 H96.7 V643.7 H91 Q89.3 643.5 89.3 641.4Z" fill="#666"/>
    <path d="M95.2 631.6 H102 M100.6 632 V641 Q100.6 643.4 96.6 643.2" fill="none" stroke="#666" stroke-width="1"/>
    <path d="M101 631.1 H102.7 L103.9 633.5 H100.6Z" fill="#666"/>
    <!-- normal view -->
    <g fill="none" stroke="#fff" stroke-width="1.4">
      <rect x="537.6" y="631.6" width="12" height="11.8"/>
      <path d="M541.6 631.6 V643.4 M545.6 631.6 V643.4 M537.6 635.5 H549.6 M537.6 639.5 H549.6"/>
    </g>
    <!-- page layout -->
    <g fill="none" stroke="#666" stroke-width="1.1">
      <rect x="573.2" y="631.6" width="12.8" height="11.8" rx="1"/>
      <rect x="575.8" y="633.4" width="7.6" height="8.2" stroke-width=".9"/>
      <path d="M577.4 635.6 H581.8 M577.4 637.5 H581.8 M577.4 639.4 H581.8" stroke-width=".9"/>
    </g>
    <!-- page break -->
    <g fill="none" stroke="#555" stroke-width="1.1">
      <rect x="608.8" y="631.6" width="12.8" height="11.8" rx="1"/>
      <path d="M613 631.6 V638 M616.8 631.6 V638 H608.8"/>
    </g>
    <!-- zoom -->
    <path d="M641.6 637.6 H649" stroke="#777" stroke-width="2"/>
    <rect x="657" y="636" width="97.4" height="3.4" rx="1.7" fill="#a2a2a2"/>
    <circle cx="705.7" cy="637.6" r="5.6" fill="#fff" stroke="#bdbdbd" stroke-width=".8"/>
    <path d="M763 637.7 H771 M767 633.8 V641.6" stroke="#666" stroke-width="2"/>
  </svg>
  <div class="abs" style="left:788px;top:4px;font-size:12px;line-height:16px;color:#555">100%</div>
</div>
</div>
</body>
</html>
